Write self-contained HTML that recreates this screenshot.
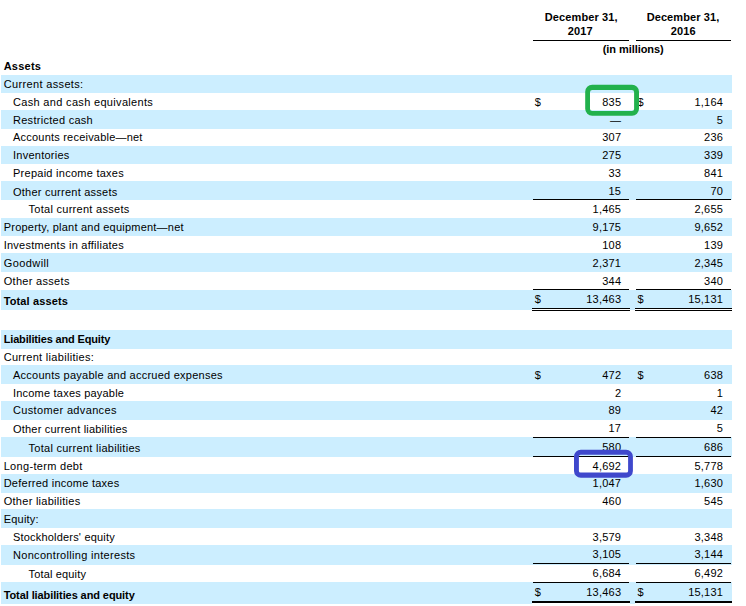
<!DOCTYPE html>
<html lang="en"><head><meta charset="utf-8"><title>Balance sheet</title>
<style>
html,body{margin:0;padding:0;background:#fff;}
body{width:746px;height:606px;position:relative;overflow:hidden;font-family:"Liberation Sans",sans-serif;font-size:11px;color:#000;}
.b{position:absolute;left:1px;width:731px;background:#cceeff;}
.t{position:absolute;height:14px;line-height:14px;white-space:nowrap;letter-spacing:0.25px;}
.t.bd{font-weight:bold;letter-spacing:0;}
.n{position:absolute;height:14px;line-height:14px;white-space:nowrap;text-align:right;width:80px;letter-spacing:0.22px;}
.d{position:absolute;height:14px;line-height:14px;}
.l{position:absolute;height:1px;background:#000;}
.h{position:absolute;height:14px;line-height:14px;font-weight:bold;text-align:center;white-space:nowrap;letter-spacing:0.1px;}
.box{position:absolute;box-sizing:border-box;}
</style></head><body>

<div class="b" style="top:75px;height:18px"></div>
<div class="b" style="top:110.3px;height:18.5px"></div>
<div class="b" style="top:146px;height:17.7px"></div>
<div class="b" style="top:180.8px;height:19.5px"></div>
<div class="b" style="top:217.8px;height:18.2px"></div>
<div class="b" style="top:253.2px;height:18.5px"></div>
<div class="b" style="top:290px;height:20px"></div>
<div class="b" style="top:330.2px;height:18.5px"></div>
<div class="b" style="top:365px;height:18.7px"></div>
<div class="b" style="top:401.1px;height:18.7px"></div>
<div class="b" style="top:437px;height:19.8px"></div>
<div class="b" style="top:474px;height:18.8px"></div>
<div class="b" style="top:509px;height:18.7px"></div>
<div class="b" style="top:545px;height:19.8px"></div>
<div class="b" style="top:582px;height:22px"></div>
<div class="h" style="left:521.2px;width:120px;top:10px;letter-spacing:0.1px">December 31,</div>
<div class="h" style="left:520.2px;width:120px;top:24px;letter-spacing:0.1px">2017</div>
<div class="h" style="left:623px;width:120px;top:10px;letter-spacing:0.1px">December 31,</div>
<div class="h" style="left:623.2px;width:120px;top:24px;letter-spacing:0.1px">2016</div>
<div class="h" style="left:573.2px;width:120px;top:42px;letter-spacing:-0.07px">(in millions)</div>
<div class="l" style="top:40px;left:533px;width:96px"></div>
<div class="l" style="top:40px;left:636px;width:95px"></div>
<div class="l" style="top:199px;left:533px;width:96px"></div>
<div class="l" style="top:199px;left:636px;width:95px"></div>
<div class="l" style="top:289px;left:533px;width:96px"></div>
<div class="l" style="top:289px;left:636px;width:95px"></div>
<div class="l" style="top:437px;left:533px;width:96px"></div>
<div class="l" style="top:437px;left:636px;width:95px"></div>
<div class="l" style="top:456px;left:533px;width:96px"></div>
<div class="l" style="top:456px;left:636px;width:95px"></div>
<div class="l" style="top:563px;left:533px;width:96px"></div>
<div class="l" style="top:563px;left:636px;width:95px"></div>
<div class="l" style="top:582px;left:533px;width:96px"></div>
<div class="l" style="top:582px;left:636px;width:95px"></div>
<div class="l" style="top:308px;left:532px;width:98px;height:3px;background:#fff"></div>
<div class="l" style="top:308px;left:532px;width:98px"></div>
<div class="l" style="top:310px;left:532px;width:98px"></div>
<div class="l" style="top:601px;left:532px;width:98px;height:3px;background:#fff"></div>
<div class="l" style="top:601px;left:532px;width:98px;height:2px"></div>
<div class="l" style="top:308px;left:635px;width:97px;height:3px;background:#fff"></div>
<div class="l" style="top:308px;left:635px;width:97px"></div>
<div class="l" style="top:310px;left:635px;width:97px"></div>
<div class="l" style="top:601px;left:635px;width:97px;height:3px;background:#fff"></div>
<div class="l" style="top:601px;left:635px;width:97px;height:2px"></div>
<div class="t bd" style="left:3.7px;top:59px;letter-spacing:0.240px">Assets</div>
<div class="t" style="left:3.7px;top:77px;letter-spacing:0.349px">Current assets:</div>
<div class="t" style="left:13px;top:95px;letter-spacing:0.324px">Cash and cash equivalents</div>
<div class="d" style="left:534.7px;top:95px">$</div>
<div class="d" style="left:637.6px;top:95px">$</div>
<div class="n" style="left:541.22px;top:95px">835</div>
<div class="n" style="left:643.12px;top:95px">1,164</div>
<div class="t" style="left:13px;top:113px;letter-spacing:0.278px">Restricted cash</div>
<div class="n" style="left:541.22px;top:113px">—</div>
<div class="n" style="left:643.12px;top:113px">5</div>
<div class="t" style="left:13px;top:130px;letter-spacing:0.213px">Accounts receivable—net</div>
<div class="n" style="left:541.22px;top:130px">307</div>
<div class="n" style="left:643.12px;top:130px">236</div>
<div class="t" style="left:13px;top:148px;letter-spacing:0.250px">Inventories</div>
<div class="n" style="left:541.22px;top:148px">275</div>
<div class="n" style="left:643.12px;top:148px">339</div>
<div class="t" style="left:13px;top:166px;letter-spacing:0.261px">Prepaid income taxes</div>
<div class="n" style="left:541.22px;top:166px">33</div>
<div class="n" style="left:643.12px;top:166px">841</div>
<div class="t" style="left:13px;top:185px;letter-spacing:0.241px">Other current assets</div>
<div class="n" style="left:541.22px;top:184px">15</div>
<div class="n" style="left:643.12px;top:184px">70</div>
<div class="t" style="left:28.5px;top:202px;letter-spacing:0.282px">Total current assets</div>
<div class="n" style="left:541.22px;top:202px">1,465</div>
<div class="n" style="left:643.12px;top:202px">2,655</div>
<div class="t" style="left:3.7px;top:220px;letter-spacing:0.219px">Property, plant and equipment—net</div>
<div class="n" style="left:541.22px;top:220px">9,175</div>
<div class="n" style="left:643.12px;top:220px">9,652</div>
<div class="t" style="left:3.7px;top:238px;letter-spacing:0.243px">Investments in affiliates</div>
<div class="n" style="left:541.22px;top:238px">108</div>
<div class="n" style="left:643.12px;top:238px">139</div>
<div class="t" style="left:3.7px;top:256px;letter-spacing:0.420px">Goodwill</div>
<div class="n" style="left:541.22px;top:256px">2,371</div>
<div class="n" style="left:643.12px;top:256px">2,345</div>
<div class="t" style="left:3.7px;top:274px;letter-spacing:0.303px">Other assets</div>
<div class="n" style="left:541.22px;top:274px">344</div>
<div class="n" style="left:643.12px;top:274px">340</div>
<div class="t bd" style="left:3.7px;top:294px;letter-spacing:0.127px">Total assets</div>
<div class="d" style="left:534.7px;top:292px">$</div>
<div class="d" style="left:637.6px;top:292px">$</div>
<div class="n" style="left:541.22px;top:292px">13,463</div>
<div class="n" style="left:643.12px;top:292px">15,131</div>
<div class="t bd" style="left:3.7px;top:332px;letter-spacing:-0.162px">Liabilities and Equity</div>
<div class="t" style="left:3.7px;top:350px;letter-spacing:0.302px">Current liabilities:</div>
<div class="t" style="left:13px;top:368px;letter-spacing:0.250px">Accounts payable and accrued expenses</div>
<div class="d" style="left:534.7px;top:368px">$</div>
<div class="d" style="left:637.6px;top:368px">$</div>
<div class="n" style="left:541.22px;top:368px">472</div>
<div class="n" style="left:643.12px;top:368px">638</div>
<div class="t" style="left:13px;top:386px;letter-spacing:0.208px">Income taxes payable</div>
<div class="n" style="left:541.22px;top:386px">2</div>
<div class="n" style="left:643.12px;top:386px">1</div>
<div class="t" style="left:13px;top:403px;letter-spacing:0.351px">Customer advances</div>
<div class="n" style="left:541.22px;top:403px">89</div>
<div class="n" style="left:643.12px;top:403px">42</div>
<div class="t" style="left:13px;top:422px;letter-spacing:0.201px">Other current liabilities</div>
<div class="n" style="left:541.22px;top:421px">17</div>
<div class="n" style="left:643.12px;top:421px">5</div>
<div class="t" style="left:28.5px;top:441px;letter-spacing:0.276px">Total current liabilities</div>
<div class="n" style="left:541.22px;top:440px">580</div>
<div class="n" style="left:643.12px;top:440px">686</div>
<div class="t" style="left:3.7px;top:459px;letter-spacing:0.312px">Long-term debt</div>
<div class="n" style="left:541.22px;top:459px">4,692</div>
<div class="n" style="left:643.12px;top:459px">5,778</div>
<div class="t" style="left:3.7px;top:476px;letter-spacing:0.240px">Deferred income taxes</div>
<div class="n" style="left:541.22px;top:476px">1,047</div>
<div class="n" style="left:643.12px;top:476px">1,630</div>
<div class="t" style="left:3.7px;top:494px;letter-spacing:0.274px">Other liabilities</div>
<div class="n" style="left:541.22px;top:494px">460</div>
<div class="n" style="left:643.12px;top:494px">545</div>
<div class="t" style="left:3.7px;top:512px;letter-spacing:0.216px">Equity:</div>
<div class="t" style="left:13px;top:530px;letter-spacing:0.188px">Stockholders' equity</div>
<div class="n" style="left:541.22px;top:530px">3,579</div>
<div class="n" style="left:643.12px;top:530px">3,348</div>
<div class="t" style="left:13px;top:548px;letter-spacing:0.310px">Noncontrolling interests</div>
<div class="n" style="left:541.22px;top:547px">3,105</div>
<div class="n" style="left:643.12px;top:547px">3,144</div>
<div class="t" style="left:28.5px;top:567px;letter-spacing:0.159px">Total equity</div>
<div class="n" style="left:541.22px;top:566px">6,684</div>
<div class="n" style="left:643.12px;top:566px">6,492</div>
<div class="t bd" style="left:3.7px;top:588px;letter-spacing:-0.095px">Total liabilities and equity</div>
<div class="d" style="left:534.7px;top:585px">$</div>
<div class="d" style="left:637.6px;top:585px">$</div>
<div class="n" style="left:541.22px;top:585px">13,463</div>
<div class="n" style="left:643.12px;top:585px">15,131</div>
<svg class="box" style="left:0;top:0" width="746" height="606" viewBox="0 0 746 606"><path fill="#22b14c" fill-rule="evenodd" d="M592.2 84.8H632A7 7 0 0 1 639 91.8V108.7A7 7 0 0 1 632 115.7H592.2A7 7 0 0 1 585.2 108.7V91.8A7 7 0 0 1 592.2 84.8Z M592.2 90H631.9A2.2 2.2 0 0 1 634.1 92.2V108.7A2.2 2.2 0 0 1 631.9 110.9H592.2A2.2 2.2 0 0 1 590 108.7V92.2A2.2 2.2 0 0 1 592.2 90Z"/><path fill="#3f48cc" fill-rule="evenodd" d="M580.8 449.8H626.1A6.8 6.8 0 0 1 632.9 456.6V470.9A6.8 6.8 0 0 1 626.1 477.7H580.8A6.8 6.8 0 0 1 574 470.9V456.6A6.8 6.8 0 0 1 580.8 449.8Z M580.5 454.8H626.5A1.6 1.6 0 0 1 628.1 456.4V471A1.6 1.6 0 0 1 626.5 472.6H580.5A1.6 1.6 0 0 1 578.9 471V456.4A1.6 1.6 0 0 1 580.5 454.8Z"/></svg>
</body></html>
